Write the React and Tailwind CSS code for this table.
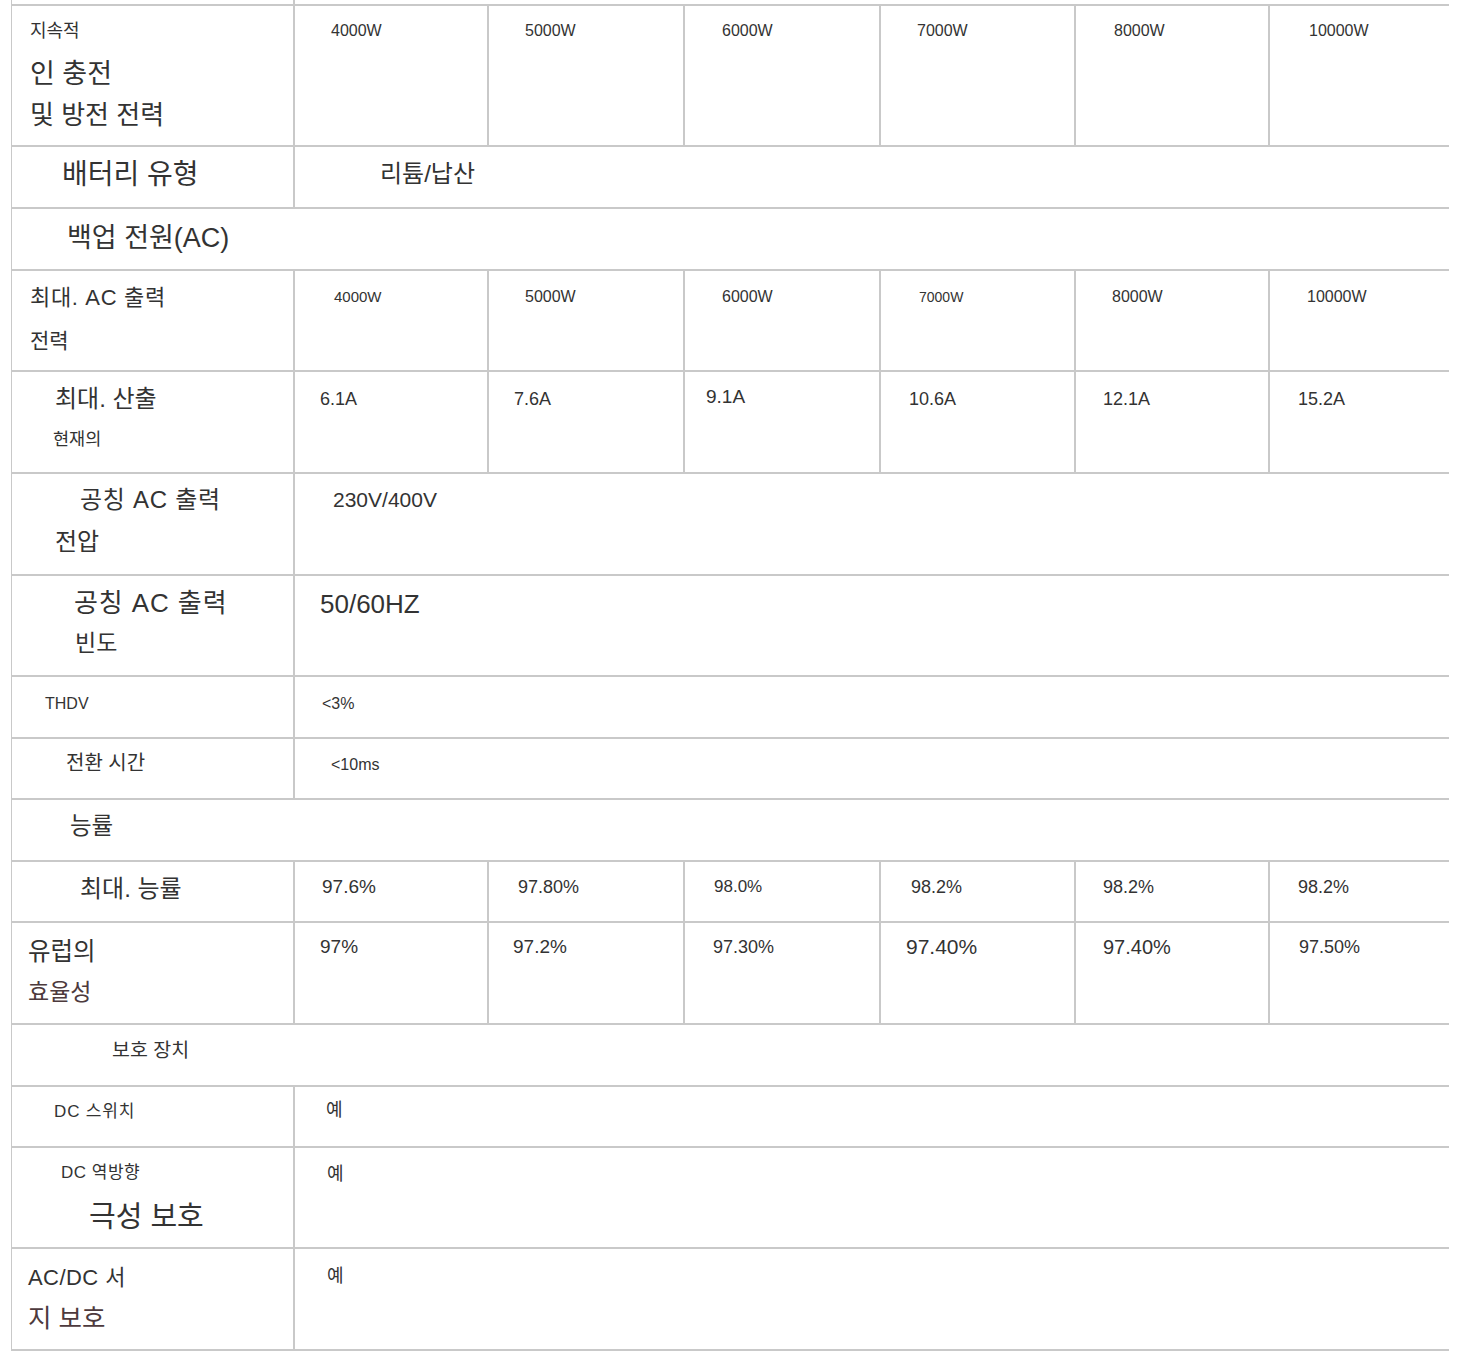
import React from "react";

const LINE = "border-[#c9c9c9]";

// one text line inside a cell; offsets come from the c prop
const Ln = ({ c, children }) => (
  <div className={`leading-[20px] whitespace-nowrap ${c}`}>{children}</div>
);

const Label = ({ children }) => (
  <div className={`w-[283px] shrink-0 border-r-2 ${LINE}`}>{children}</div>
);

// widths of the six value columns
const colW = ["w-[194px]", "w-[196px]", "w-[196px]", "w-[195px]", "w-[194px]", ""];

const Values = ({ items }) => (
  <>
    {items.map((it, i) => (
      <div
        key={i}
        className={i < 5 ? `${colW[i]} shrink-0 border-r-2 ${LINE}` : "flex-1"}
      >
        <Ln c={it.c}>{it.t}</Ln>
      </div>
    ))}
  </>
);

const Row = ({ h, children }) => (
  <div className={`flex border-b-2 ${LINE} ${h}`}>{children}</div>
);

export default function App() {
  return (
    <div
      className="bg-white min-h-[1352px] text-[#333333]"
      style={{ fontFamily: '"Liberation Sans", "Noto Sans CJK KR", sans-serif' }}
    >
      <div className={`ml-[11px] w-[1438px] border-l ${LINE}`}>
        <div className="flex h-[4px]">
          <div className={`w-[283px] border-r-2 ${LINE}`} />
        </div>
        <div className={`border-t-2 ${LINE}`}>
          {/* continuous charge / discharge power */}
          <Row h="h-[141px]">
            <Label>
              <Ln c="mt-[15px] pl-[18px] text-[18px]">지속적</Ln>
              <Ln c="mt-[23px] pl-[18px] text-[27px]">인 충전</Ln>
              <Ln c="mt-[21px] pl-[18px] text-[26px]">및 방전 전력</Ln>
            </Label>
            <Values
              items={[
                { t: "4000W", c: "mt-[15px] pl-[36px] text-[16px]" },
                { t: "5000W", c: "mt-[15px] pl-[36px] text-[16px]" },
                { t: "6000W", c: "mt-[15px] pl-[37px] text-[16px]" },
                { t: "7000W", c: "mt-[15px] pl-[36px] text-[16px]" },
                { t: "8000W", c: "mt-[15px] pl-[38px] text-[16px]" },
                { t: "10000W", c: "mt-[15px] pl-[39px] text-[16px]" },
              ]}
            />
          </Row>

          <Row h="h-[62px]">
            <Label>
              <Ln c="mt-[18px] pl-[50px] text-[28px]">배터리 유형</Ln>
            </Label>
            <div className="flex-1">
              <Ln c="mt-[17px] pl-[85px] text-[24px]">리튬/납산</Ln>
            </div>
          </Row>

          <Row h="h-[62px]">
            <div className="flex-1">
              <Ln c="mt-[19px] pl-[55px] text-[27px]">백업 전원(AC)</Ln>
            </div>
          </Row>

          <Row h="h-[101px]">
            <Label>
              <Ln c="mt-[17px] pl-[18px] text-[22px] tracking-[0.03em]">최대. AC 출력</Ln>
              <Ln c="mt-[23px] pl-[18px] text-[21px]">전력</Ln>
            </Label>
            <Values
              items={[
                { t: "4000W", c: "mt-[16px] pl-[39px] text-[15px]" },
                { t: "5000W", c: "mt-[16px] pl-[36px] text-[16px]" },
                { t: "6000W", c: "mt-[16px] pl-[37px] text-[16px]" },
                { t: "7000W", c: "mt-[16px] pl-[38px] text-[14px]" },
                { t: "8000W", c: "mt-[16px] pl-[36px] text-[16px]" },
                { t: "10000W", c: "mt-[16px] pl-[37px] text-[16px]" },
              ]}
            />
          </Row>

          <Row h="h-[102px]">
            <Label>
              <Ln c="mt-[17px] pl-[43px] text-[24px]">최대. 산출</Ln>
              <Ln c="mt-[20px] pl-[41px] text-[17.5px]">현재의</Ln>
            </Label>
            <Values
              items={[
                { t: "6.1A", c: "mt-[17px] pl-[25px] text-[18px]" },
                { t: "7.6A", c: "mt-[17px] pl-[25px] text-[18px]" },
                { t: "9.1A", c: "mt-[15px] pl-[21px] text-[19px]" },
                { t: "10.6A", c: "mt-[17px] pl-[28px] text-[18px]" },
                { t: "12.1A", c: "mt-[17px] pl-[27px] text-[18px]" },
                { t: "15.2A", c: "mt-[17px] pl-[28px] text-[18px]" },
              ]}
            />
          </Row>

          <Row h="h-[102px]">
            <Label>
              <Ln c="mt-[16px] pl-[68px] text-[24px] tracking-[0.03em]">공칭 AC 출력</Ln>
              <Ln c="mt-[22px] pl-[43px] text-[24px]">전압</Ln>
            </Label>
            <div className="flex-1">
              <Ln c="mt-[16px] pl-[38px] text-[21px]">230V/400V</Ln>
            </div>
          </Row>

          <Row h="h-[101px]">
            <Label>
              <Ln c="mt-[17px] pl-[62px] text-[26px] tracking-[0.035em]">공칭 AC 출력</Ln>
              <Ln c="mt-[20px] pl-[63px] text-[23px]">빈도</Ln>
            </Label>
            <div className="flex-1">
              <Ln c="mt-[18px] pl-[25px] text-[26px]">50/60HZ</Ln>
            </div>
          </Row>

          <Row h="h-[62px]">
            <Label>
              <Ln c="mt-[17px] pl-[33px] text-[16px]">THDV</Ln>
            </Label>
            <div className="flex-1">
              <Ln c="mt-[17px] pl-[27px] text-[16px]">&lt;3%</Ln>
            </div>
          </Row>

          <Row h="h-[61px]">
            <Label>
              <Ln c="mt-[14px] pl-[54px] text-[20px]">전환 시간</Ln>
            </Label>
            <div className="flex-1">
              <Ln c="mt-[16px] pl-[36px] text-[16px]">&lt;10ms</Ln>
            </div>
          </Row>

          <Row h="h-[62px]">
            <div className="flex-1">
              <Ln c="mt-[16px] pl-[58px] text-[23.5px]">능률</Ln>
            </div>
          </Row>

          <Row h="h-[61px]">
            <Label>
              <Ln c="mt-[17px] pl-[68px] text-[24px]">최대. 능률</Ln>
            </Label>
            <Values
              items={[
                { t: "97.6%", c: "mt-[15px] pl-[27px] text-[19px]" },
                { t: "97.80%", c: "mt-[15px] pl-[29px] text-[18px]" },
                { t: "98.0%", c: "mt-[15px] pl-[29px] text-[17px]" },
                { t: "98.2%", c: "mt-[15px] pl-[30px] text-[18px]" },
                { t: "98.2%", c: "mt-[15px] pl-[27px] text-[18px]" },
                { t: "98.2%", c: "mt-[15px] pl-[28px] text-[18px]" },
              ]}
            />
          </Row>

          <Row h="h-[102px]">
            <Label>
              <Ln c="mt-[19px] pl-[16px] text-[24.5px]">유럽의</Ln>
              <Ln c="mt-[20px] pl-[16px] text-[23px] text-[#4d3a3d]">효율성</Ln>
            </Label>
            <Values
              items={[
                { t: "97%", c: "mt-[14px] pl-[25px] text-[19px]" },
                { t: "97.2%", c: "mt-[14px] pl-[24px] text-[19px]" },
                { t: "97.30%", c: "mt-[14px] pl-[28px] text-[18px]" },
                { t: "97.40%", c: "mt-[14px] pl-[25px] text-[21px]" },
                { t: "97.40%", c: "mt-[14px] pl-[27px] text-[20px]" },
                { t: "97.50%", c: "mt-[14px] pl-[29px] text-[18px]" },
              ]}
            />
          </Row>

          <Row h="h-[62px]">
            <div className="flex-1">
              <Ln c="mt-[15px] pl-[100px] text-[19.5px]">보호 장치</Ln>
            </div>
          </Row>

          <Row h="h-[61px]">
            <Label>
              <Ln c="mt-[15px] pl-[42px] text-[17px] tracking-[0.05em]">DC 스위치</Ln>
            </Label>
            <div className="flex-1">
              <Ln c="mt-[13px] pl-[31px] text-[18px]">예</Ln>
            </div>
          </Row>

          <Row h="h-[101px]">
            <Label>
              <Ln c="mt-[15px] pl-[49px] text-[17px] tracking-[0.03em]">DC 역방향</Ln>
              <Ln c="mt-[24px] pl-[77px] text-[29px]">극성 보호</Ln>
            </Label>
            <div className="flex-1">
              <Ln c="mt-[16px] pl-[32px] text-[18px]">예</Ln>
            </div>
          </Row>

          <Row h="h-[102px]">
            <Label>
              <Ln c="mt-[19px] pl-[16px] text-[22px] tracking-[0.02em]">AC/DC 서</Ln>
              <Ln c="mt-[20px] pl-[16px] text-[25.5px] text-[#4d3a3d]">지 보호</Ln>
            </Label>
            <div className="flex-1">
              <Ln c="mt-[17px] pl-[32px] text-[18px]">예</Ln>
            </div>
          </Row>
        </div>
      </div>
    </div>
  );
}
